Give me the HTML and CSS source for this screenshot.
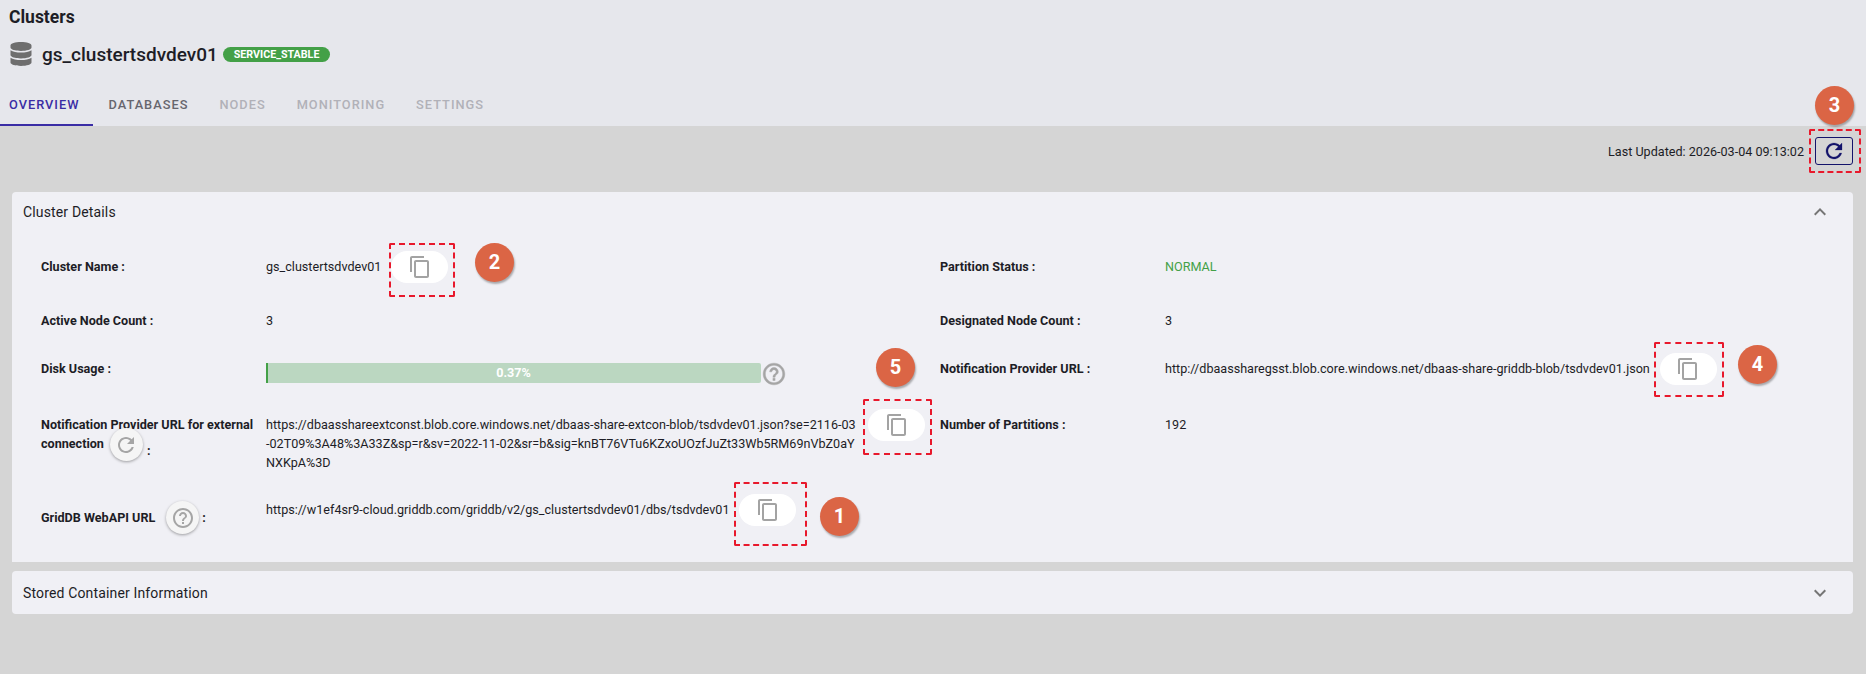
FILE: index.html
```html
<!DOCTYPE html>
<html lang="en">
<head>
  <meta charset="UTF-8">
  <meta name="viewport" content="width=device-width, initial-scale=1.0">
  <title>Clusters</title>
  <link rel="stylesheet" href="styles.css">
</head>
<body>
  <svg class="icon-defs" width="0" height="0">
    <defs>
      <symbol id="copy" viewBox="0 0 24 24"><path d="M16 1H4c-1.1 0-2 .9-2 2v14h2V3h12V1zm3 4H8c-1.1 0-2 .9-2 2v14c0 1.1.9 2 2 2h11c1.1 0 2-.9 2-2V7c0-1.1-.9-2-2-2zm0 16H8V7h11v14z"/></symbol>
      <symbol id="refresh" viewBox="0 0 24 24"><path d="M17.65 6.35C16.2 4.9 14.21 4 12 4c-4.42 0-7.99 3.58-7.99 8s3.57 8 7.99 8c3.73 0 6.84-2.55 7.73-6h-2.08c-.82 2.33-3.04 4-5.65 4-3.31 0-6-2.69-6-6s2.69-6 6-6c1.66 0 3.14.69 4.22 1.78L13 11h7V4l-2.35 2.35z"/></symbol>
      <symbol id="help" viewBox="0 0 24 24"><path d="M11 18h2v-2h-2v2zm1-16C6.48 2 2 6.48 2 12s4.48 10 10 10 10-4.48 10-10S17.52 2 12 2zm0 18c-4.41 0-8-3.59-8-8s3.59-8 8-8 8 3.59 8 8-3.59 8-8 8zm0-14c-2.21 0-4 1.79-4 4h2c0-1.1.9-2 2-2s2 .9 2 2c0 2-3 1.75-3 5h2c0-2.25 3-2.5 3-5 0-2.21-1.79-4-4-4z"/></symbol>
    </defs>
  </svg>

  <header class="top">
    <div class="page-title">Clusters</div>
    <div class="cluster-title">
      <svg class="db-icon" viewBox="0 0 448 512"><path d="M448 73.143v45.714C448 159.143 347.667 192 224 192S0 159.143 0 118.857V73.143C0 32.857 100.333 0 224 0s224 32.857 224 73.143zM448 176v102.857C448 319.143 347.667 352 224 352S0 319.143 0 278.857V176c48.125 33.143 136.208 48.572 224 48.572S399.874 209.143 448 176zm0 160v102.857C448 479.143 347.667 512 224 512S0 479.143 0 438.857V336c48.125 33.143 136.208 48.572 224 48.572S399.874 369.143 448 336z"/></svg>
      <span class="cluster-name">gs_clustertsdvdev01</span>
      <span class="status-chip">SERVICE_STABLE</span>
    </div>
    <nav class="tabs">
      <div class="tab active">OVERVIEW</div>
      <div class="tab">DATABASES</div>
      <div class="tab disabled">NODES</div>
      <div class="tab disabled">MONITORING</div>
      <div class="tab disabled">SETTINGS</div>
    </nav>
  </header>

  <main class="content">
    <div class="toolbar">
      <span class="last-updated">Last Updated: 2026-03-04 09:13:02</span>
      <button class="refresh-btn"><svg class="icon"><use href="#refresh"/></svg></button>
    </div>

    <section class="card first">
      <div class="card-head">
        <span>Cluster Details</span>
        <svg class="chevron" viewBox="0 0 24 24"><path d="M12 8l-6 6 1.41 1.41L12 10.83l4.59 4.58L18 14z"/></svg>
      </div>
      <div class="details">
        <div class="label">Cluster Name :</div>
        <div class="value">gs_clustertsdvdev01<button class="copy-btn"><svg class="icon"><use href="#copy"/></svg></button></div>
        <div class="label">Partition Status :</div>
        <div class="value normal">NORMAL</div>

        <div class="label">Active Node Count :</div>
        <div class="value">3</div>
        <div class="label">Designated Node Count :</div>
        <div class="value">3</div>

        <div class="label">Disk Usage :</div>
        <div class="value">
          <div class="disk-bar"><div class="disk-fill"></div><span class="disk-text">0.37%</span></div>
          <svg class="icon disk-help"><use href="#help"/></svg>
        </div>
        <div class="label">Notification Provider URL :</div>
        <div class="value">http://dbaassharegsst.blob.core.windows.net/dbaas-share-griddb-blob/tsdvdev01.json<button class="copy-btn"><svg class="icon"><use href="#copy"/></svg></button></div>

        <div class="label">
          Notification Provider URL for external
          <div class="label-line">
            connection
            <button class="round-btn conn-btn"><svg class="icon"><use href="#refresh"/></svg></button>
            <span class="low-colon">:</span>
          </div>
        </div>
        <div class="value"><span class="long-url">https://dbaasshareextconst.blob.core.windows.net/dbaas-share-extcon-blob/tsdvdev01.json?se=2116-03-02T09%3A48%3A33Z&amp;sp=r&amp;sv=2022-11-02&amp;sr=b&amp;sig=knBT76VTu6KZxoUOzfJuZt33Wb5RM69nVbZ0aYNXKpA%3D</span><button class="copy-btn"><svg class="icon"><use href="#copy"/></svg></button></div>
        <div class="label">Number of Partitions :</div>
        <div class="value">192</div>

        <div class="label api-label">
          GridDB WebAPI URL
          <button class="round-btn api-btn"><svg class="icon"><use href="#help"/></svg></button>
          <span>:</span>
        </div>
        <div class="value">https://w1ef4sr9-cloud.griddb.com/griddb/v2/gs_clustertsdvdev01/dbs/tsdvdev01<button class="copy-btn"><svg class="icon"><use href="#copy"/></svg></button></div>
      </div>
    </section>

    <section class="card">
      <div class="card-head">
        <span>Stored Container Information</span>
        <svg class="chevron" viewBox="0 0 24 24"><path d="M16.59 8.59L12 13.17 7.41 8.59 6 10l6 6 6-6z"/></svg>
      </div>
    </section>
  </main>

  <!-- annotations drawn over the screenshot -->
  <div class="mark mark-1"></div>
  <div class="mark mark-2"></div>
  <div class="mark mark-3"></div>
  <div class="mark mark-4"></div>
  <div class="mark mark-5"></div>
  <div class="step step-1">1</div>
  <div class="step step-2">2</div>
  <div class="step step-3">3</div>
  <div class="step step-4">4</div>
  <div class="step step-5">5</div>
</body>
</html>
```

FILE: styles.css
```css
html, body{
  height: 100%;
}
body{
  margin: 0;
  position: relative;
  overflow: hidden;
  font-family: Roboto, "Liberation Sans", sans-serif;
  font-size: 12.6px;
  color: #1d1d26;
  background-color: #d5d5d5;
}
.icon-defs{
  position: absolute;
}
.top{
  height: 126px;
  box-sizing: border-box;
  padding-top: 7px;
  display: flex;
  flex-direction: column;
  background-color: #e6e7ec;
}
.page-title{
  margin-left: 9px;
  font-size: 17.5px;
  font-weight: 700;
  line-height: 21px;
}
.cluster-title{
  display: flex;
  align-items: center;
  margin: 14px 0 0 10px;
}
.db-icon{
  width: 22px;
  height: 24px;
  fill: #6e6e6e;
}
.cluster-name{
  margin-left: 10px;
  font-size: 19px;
  font-weight: 500;
}
.status-chip{
  margin-left: 5px;
  padding: 0 11px;
  height: 15px;
  line-height: 15px;
  border-radius: 8px;
  font-size: 10.7px;
  font-weight: 700;
  color: #fff;
  background-color: #43a047;
}
.tabs{
  display: flex;
  margin-top: auto;
}
.tab{
  padding: 17px 15.5px 11px;
  font-size: 12.8px;
  font-weight: 500;
  line-height: 16px;
  letter-spacing: 1px;
  color: #66666e;
}
.tab:first-child{
  padding: 17px 13.5px 11px 9px;
}
.tab.active{
  color: #3a2da5;
  border-bottom: 2px solid #3a2da5;
}
.tab.disabled{
  color: #b1b1b8;
}
.content{
  padding: 11px 13px 0 12px;
}
.toolbar{
  display: flex;
  justify-content: flex-end;
  align-items: center;
  gap: 11px;
  margin-bottom: 27px;
}
.refresh-btn{
  width: 38px;
  height: 28px;
  padding: 0;
  display: flex;
  align-items: center;
  justify-content: center;
  background: transparent;
  border: 1px solid #14146b;
  border-radius: 3px;
  fill: #14146b;
  stroke: #14146b;
  stroke-width: .25px;
}
.icon{
  width: 24px;
  height: 24px;
}
.card{
  margin-bottom: 9px;
  background-color: #f0f0f5;
  border-radius: 4px;
}
.card.first{
  border-radius: 4px 4px 0 0;
}
.card-head{
  height: 43px;
  padding: 0 21px 0 11px;
  display: flex;
  align-items: center;
  justify-content: space-between;
  font-size: 14px;
  letter-spacing: .15px;
}
.card.first .card-head{
  height: 40px;
}
.chevron{
  width: 24px;
  height: 24px;
  fill: #757575;
}
.details{
  display: grid;
  grid-template-columns: 225px 674px 225px 1fr;
  grid-template-rows: 54px 48px 56px 85px 62px;
  padding: 25px 0 0 29px;
  line-height: 19px;
}
.label{
  font-weight: 700;
}
.label-line,
.api-label{
  display: flex;
  align-items: flex-start;
  height: 19px;
}
.value{
  display: flex;
  align-items: flex-start;
}
.normal{
  color: #43a047;
}
.copy-btn{
  flex: none;
  width: 57px;
  height: 32px;
  margin: -6px 0 0 10px;
  padding: 0;
  border: none;
  border-radius: 16px;
  background-color: #fff;
  fill: #a3a3a3;
  display: flex;
  align-items: center;
  justify-content: center;
}
.disk-bar{
  position: relative;
  width: 495px;
  height: 20px;
  margin-top: 4px;
  background-color: #bbd7c1;
  border-radius: 2px;
}
.disk-fill{
  width: 2px;
  height: 100%;
  background-color: #43a047;
}
.disk-text{
  position: absolute;
  inset: 0;
  text-align: center;
  line-height: 20px;
  font-weight: 700;
  color: #fff;
}
.disk-help{
  width: 26px;
  height: 26px;
  margin-top: 2px;
  fill: #a5a5a5;
  stroke: #a5a5a5;
  stroke-width: .4px;
}
.long-url{
  width: 590px;
  margin-right: 2px;
  word-break: break-all;
}
.round-btn{
  flex: none;
  width: 33px;
  height: 33px;
  padding: 0;
  border: none;
  border-radius: 50%;
  display: flex;
  align-items: center;
  justify-content: center;
  background-color: #f5f5f5;
  fill: #a5a5a5;
  box-shadow: 0 1px 3px rgba(0, 0, 0, .35);
}
.conn-btn{
  margin: -6px 4px 0 6px;
}
.low-colon{
  margin-top: 7px;
}
.api-label{
  padding-top: 8px;
}
.api-btn{
  margin: -7px 3px 0 11px;
}
.mark{
  position: absolute;
  box-sizing: border-box;
  border: 2px dashed #e8192c;
  border-radius: 2px;
}
.mark-1{ left: 734px; top: 482px; width: 73px; height: 64px; }
.mark-2{ left: 389px; top: 243px; width: 66px; height: 54px; }
.mark-3{ left: 1809px; top: 129px; width: 52px; height: 44px; }
.mark-4{ left: 1654px; top: 342px; width: 70px; height: 55px; }
.mark-5{ left: 863px; top: 399px; width: 69px; height: 56px; }
.step{
  position: absolute;
  width: 39px;
  height: 39px;
  line-height: 39px;
  text-align: center;
  border-radius: 50%;
  font-size: 20px;
  font-weight: 700;
  color: #fff;
  background-color: #db6545;
  box-shadow: 1px 2px 2px rgba(0, 0, 0, .3);
}
.step-1{ left: 820px; top: 497px; }
.step-2{ left: 475px; top: 243px; }
.step-3{ left: 1815px; top: 86px; }
.step-4{ left: 1738px; top: 345px; }
.step-5{ left: 876px; top: 348px; }
```
